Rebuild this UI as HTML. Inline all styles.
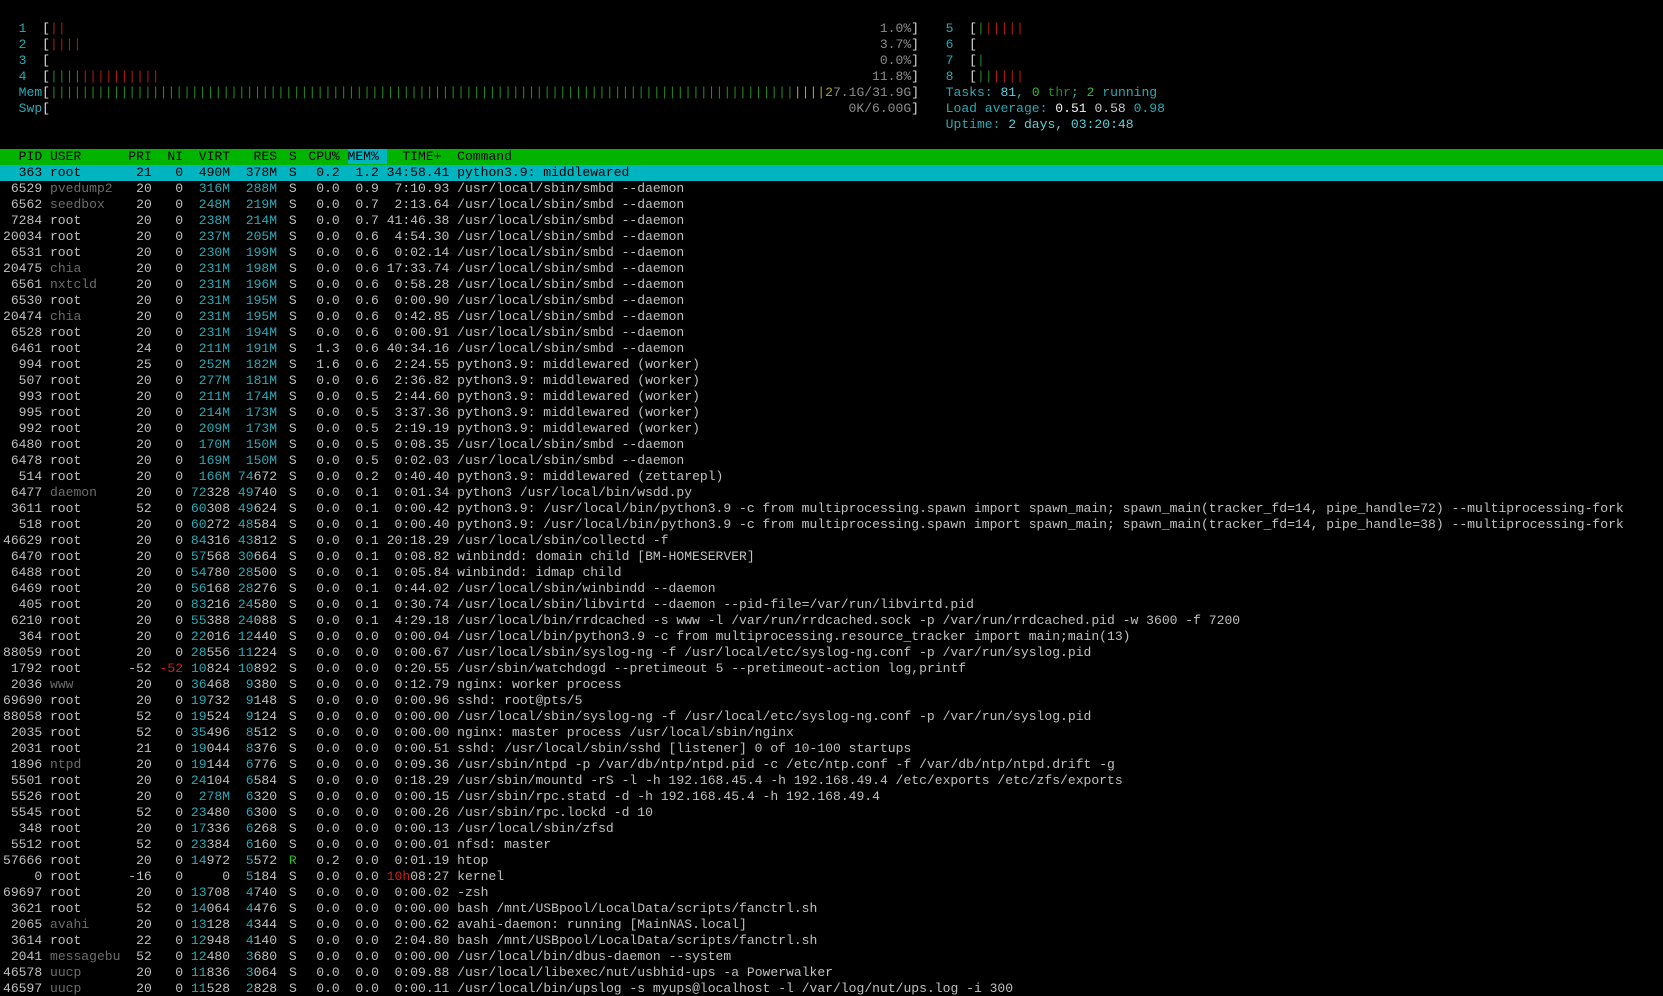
<!DOCTYPE html>
<html><head><meta charset="utf-8">
<style>
html,body{margin:0;padding:0;background:#000;width:1663px;height:996px;overflow:hidden}
body{font-family:"Liberation Mono",monospace;font-size:13.05px;color:#c0c0c0;padding-top:21px;box-sizing:border-box;position:relative}
.l{height:16px;line-height:16px;white-space:pre;padding-left:3px;overflow:hidden;width:1660px}
i,em,s,b,u{font-style:normal;text-decoration:none;font-weight:normal}
u{position:relative;left:4px}
i{color:#2aaab4}
em{color:#6c6c6c}
s{color:#c82020}
b{color:#2bbd2b}
.hd{background:#00b400;color:#000}
.hd span{background:#00b4c0}
.sel{background:#00b4c0;color:#000}
#L{position:absolute;left:3px;top:21px;width:916px}
#R{position:absolute;left:930px;top:21px;width:733px}
.m{height:16px;line-height:16px;white-space:pre;position:relative}
.m .p{position:absolute;right:0;top:0}
.w{color:#d8d8d8}
.rb{color:#b01818}
.gb{color:#1f8a1f}
.yb{color:#b0a030}
.gt{color:#8c8c8c}
.c2{color:#2aaab4}
.cb{color:#5fd0d8}
.wt{color:#f0f0f0}
.gn{color:#3ab83a}
</style></head><body>
<div id="L">
<div class="m"><i>  1  </i><span class="w">[</span><span class="rb">||</span><span class="p"><span class="gt">1.0%</span><span class="w">]</span></span></div>
<div class="m"><i>  2  </i><span class="w">[</span><span class="rb">||||</span><span class="p"><span class="gt">3.7%</span><span class="w">]</span></span></div>
<div class="m"><i>  3  </i><span class="w">[</span><span class="p"><span class="gt">0.0%</span><span class="w">]</span></span></div>
<div class="m"><i>  4  </i><span class="w">[</span><span class="gb">||||</span><span class="rb">||||||||||</span><span class="p"><span class="gt">11.8%</span><span class="w">]</span></span></div>
<div class="m"><i>  Mem</i><span class="w">[</span><span class="gb">|||||||||||||||||||||||||||||||||||||||||||||||||||||||||||||||||||||||||||||||||||||||||||||||</span><span class="yb">||||2</span><span class="gt">7.1G/31.9G</span><span class="w">]</span></div>
<div class="m"><i>  Swp</i><span class="w">[</span><span class="p"><span class="gt">0K/6.00G</span><span class="w">]</span></span></div>
</div>
<div id="R">
<div class="m"><i>  5  </i><span class="w">[</span><span class="gb">|</span><span class="rb">|||||</span></div>
<div class="m"><i>  6  </i><span class="w">[</span></div>
<div class="m"><i>  7  </i><span class="w">[</span><span class="gb">|</span></div>
<div class="m"><i>  8  </i><span class="w">[</span><span class="gb">||</span><span class="rb">||||</span></div>
<div class="m"><span class="c2">  Tasks: </span><span class="cb">81</span><span class="c2">, </span><span class="gn">0</span><span class="gb"> thr</span><span class="c2">; </span><span class="gn">2</span><span class="c2"> running</span></div>
<div class="m"><span class="c2">  Load average: </span><span class="wt">0.51 </span><span style="color:#c8c8c8">0.58 </span><span class="c2">0.98</span></div>
<div class="m"><span class="c2">  Uptime: </span><span class="cb">2 days, 03:20:48</span></div>
</div>
<div class="l"> </div><div class="l"> </div><div class="l"> </div><div class="l"> </div><div class="l"> </div><div class="l"> </div><div class="l"> </div><div class="l"> </div>
<div class="l hd">  PID USER      PRI  NI  VIRT   RES <u>S</u>  CPU% <span>MEM% </span>  TIME+  Command</div>
<div class="l sel">  363 root       21   0  490M  378M <u>S</u>   0.2  1.2 34:58.41 python3.9: middlewared</div>
<div class="l"> 6529 <em>pvedump2</em>   20   0  <i>316M</i>  <i>288M</i> <u>S</u>   0.0  0.9  7:10.93 /usr/local/sbin/smbd --daemon</div>
<div class="l"> 6562 <em>seedbox</em>    20   0  <i>248M</i>  <i>219M</i> <u>S</u>   0.0  0.7  2:13.64 /usr/local/sbin/smbd --daemon</div>
<div class="l"> 7284 root       20   0  <i>238M</i>  <i>214M</i> <u>S</u>   0.0  0.7 41:46.38 /usr/local/sbin/smbd --daemon</div>
<div class="l">20034 root       20   0  <i>237M</i>  <i>205M</i> <u>S</u>   0.0  0.6  4:54.30 /usr/local/sbin/smbd --daemon</div>
<div class="l"> 6531 root       20   0  <i>230M</i>  <i>199M</i> <u>S</u>   0.0  0.6  0:02.14 /usr/local/sbin/smbd --daemon</div>
<div class="l">20475 <em>chia</em>       20   0  <i>231M</i>  <i>198M</i> <u>S</u>   0.0  0.6 17:33.74 /usr/local/sbin/smbd --daemon</div>
<div class="l"> 6561 <em>nxtcld</em>     20   0  <i>231M</i>  <i>196M</i> <u>S</u>   0.0  0.6  0:58.28 /usr/local/sbin/smbd --daemon</div>
<div class="l"> 6530 root       20   0  <i>231M</i>  <i>195M</i> <u>S</u>   0.0  0.6  0:00.90 /usr/local/sbin/smbd --daemon</div>
<div class="l">20474 <em>chia</em>       20   0  <i>231M</i>  <i>195M</i> <u>S</u>   0.0  0.6  0:42.85 /usr/local/sbin/smbd --daemon</div>
<div class="l"> 6528 root       20   0  <i>231M</i>  <i>194M</i> <u>S</u>   0.0  0.6  0:00.91 /usr/local/sbin/smbd --daemon</div>
<div class="l"> 6461 root       24   0  <i>211M</i>  <i>191M</i> <u>S</u>   1.3  0.6 40:34.16 /usr/local/sbin/smbd --daemon</div>
<div class="l">  994 root       25   0  <i>252M</i>  <i>182M</i> <u>S</u>   1.6  0.6  2:24.55 python3.9: middlewared (worker)</div>
<div class="l">  507 root       20   0  <i>277M</i>  <i>181M</i> <u>S</u>   0.0  0.6  2:36.82 python3.9: middlewared (worker)</div>
<div class="l">  993 root       20   0  <i>211M</i>  <i>174M</i> <u>S</u>   0.0  0.5  2:44.60 python3.9: middlewared (worker)</div>
<div class="l">  995 root       20   0  <i>214M</i>  <i>173M</i> <u>S</u>   0.0  0.5  3:37.36 python3.9: middlewared (worker)</div>
<div class="l">  992 root       20   0  <i>209M</i>  <i>173M</i> <u>S</u>   0.0  0.5  2:19.19 python3.9: middlewared (worker)</div>
<div class="l"> 6480 root       20   0  <i>170M</i>  <i>150M</i> <u>S</u>   0.0  0.5  0:08.35 /usr/local/sbin/smbd --daemon</div>
<div class="l"> 6478 root       20   0  <i>169M</i>  <i>150M</i> <u>S</u>   0.0  0.5  0:02.03 /usr/local/sbin/smbd --daemon</div>
<div class="l">  514 root       20   0  <i>166M</i> <i>74</i>672 <u>S</u>   0.0  0.2  0:40.40 python3.9: middlewared (zettarepl)</div>
<div class="l"> 6477 <em>daemon</em>     20   0 <i>72</i>328 <i>49</i>740 <u>S</u>   0.0  0.1  0:01.34 python3 /usr/local/bin/wsdd.py</div>
<div class="l"> 3611 root       52   0 <i>60</i>308 <i>49</i>624 <u>S</u>   0.0  0.1  0:00.42 python3.9: /usr/local/bin/python3.9 -c from multiprocessing.spawn import spawn_main; spawn_main(tracker_fd=14, pipe_handle=72) --multiprocessing-fork</div>
<div class="l">  518 root       20   0 <i>60</i>272 <i>48</i>584 <u>S</u>   0.0  0.1  0:00.40 python3.9: /usr/local/bin/python3.9 -c from multiprocessing.spawn import spawn_main; spawn_main(tracker_fd=14, pipe_handle=38) --multiprocessing-fork</div>
<div class="l">46629 root       20   0 <i>84</i>316 <i>43</i>812 <u>S</u>   0.0  0.1 20:18.29 /usr/local/sbin/collectd -f</div>
<div class="l"> 6470 root       20   0 <i>57</i>568 <i>30</i>664 <u>S</u>   0.0  0.1  0:08.82 winbindd: domain child [BM-HOMESERVER]</div>
<div class="l"> 6488 root       20   0 <i>54</i>780 <i>28</i>500 <u>S</u>   0.0  0.1  0:05.84 winbindd: idmap child</div>
<div class="l"> 6469 root       20   0 <i>56</i>168 <i>28</i>276 <u>S</u>   0.0  0.1  0:44.02 /usr/local/sbin/winbindd --daemon</div>
<div class="l">  405 root       20   0 <i>83</i>216 <i>24</i>580 <u>S</u>   0.0  0.1  0:30.74 /usr/local/sbin/libvirtd --daemon --pid-file=/var/run/libvirtd.pid</div>
<div class="l"> 6210 root       20   0 <i>55</i>388 <i>24</i>088 <u>S</u>   0.0  0.1  4:29.18 /usr/local/bin/rrdcached -s www -l /var/run/rrdcached.sock -p /var/run/rrdcached.pid -w 3600 -f 7200</div>
<div class="l">  364 root       20   0 <i>22</i>016 <i>12</i>440 <u>S</u>   0.0  0.0  0:00.04 /usr/local/bin/python3.9 -c from multiprocessing.resource_tracker import main;main(13)</div>
<div class="l">88059 root       20   0 <i>28</i>556 <i>11</i>224 <u>S</u>   0.0  0.0  0:00.67 /usr/local/sbin/syslog-ng -f /usr/local/etc/syslog-ng.conf -p /var/run/syslog.pid</div>
<div class="l"> 1792 root      -52 <s>-52</s> <i>10</i>824 <i>10</i>892 <u>S</u>   0.0  0.0  0:20.55 /usr/sbin/watchdogd --pretimeout 5 --pretimeout-action log,printf</div>
<div class="l"> 2036 <em>www</em>        20   0 <i>36</i>468  <i>9</i>380 <u>S</u>   0.0  0.0  0:12.79 nginx: worker process</div>
<div class="l">69690 root       20   0 <i>19</i>732  <i>9</i>148 <u>S</u>   0.0  0.0  0:00.96 sshd: root@pts/5</div>
<div class="l">88058 root       52   0 <i>19</i>524  <i>9</i>124 <u>S</u>   0.0  0.0  0:00.00 /usr/local/sbin/syslog-ng -f /usr/local/etc/syslog-ng.conf -p /var/run/syslog.pid</div>
<div class="l"> 2035 root       52   0 <i>35</i>496  <i>8</i>512 <u>S</u>   0.0  0.0  0:00.00 nginx: master process /usr/local/sbin/nginx</div>
<div class="l"> 2031 root       21   0 <i>19</i>044  <i>8</i>376 <u>S</u>   0.0  0.0  0:00.51 sshd: /usr/local/sbin/sshd [listener] 0 of 10-100 startups</div>
<div class="l"> 1896 <em>ntpd</em>       20   0 <i>19</i>144  <i>6</i>776 <u>S</u>   0.0  0.0  0:09.36 /usr/sbin/ntpd -p /var/db/ntp/ntpd.pid -c /etc/ntp.conf -f /var/db/ntp/ntpd.drift -g</div>
<div class="l"> 5501 root       20   0 <i>24</i>104  <i>6</i>584 <u>S</u>   0.0  0.0  0:18.29 /usr/sbin/mountd -rS -l -h 192.168.45.4 -h 192.168.49.4 /etc/exports /etc/zfs/exports</div>
<div class="l"> 5526 root       20   0  <i>278M</i>  <i>6</i>320 <u>S</u>   0.0  0.0  0:00.15 /usr/sbin/rpc.statd -d -h 192.168.45.4 -h 192.168.49.4</div>
<div class="l"> 5545 root       52   0 <i>23</i>480  <i>6</i>300 <u>S</u>   0.0  0.0  0:00.26 /usr/sbin/rpc.lockd -d 10</div>
<div class="l">  348 root       20   0 <i>17</i>336  <i>6</i>268 <u>S</u>   0.0  0.0  0:00.13 /usr/local/sbin/zfsd</div>
<div class="l"> 5512 root       52   0 <i>23</i>384  <i>6</i>160 <u>S</u>   0.0  0.0  0:00.01 nfsd: master</div>
<div class="l">57666 root       20   0 <i>14</i>972  <i>5</i>572 <u><b>R</b></u>   0.2  0.0  0:01.19 htop</div>
<div class="l">    0 root      -16   0     0  <i>5</i>184 <u>S</u>   0.0  0.0 <s>10h</s>08:27 kernel</div>
<div class="l">69697 root       20   0 <i>13</i>708  <i>4</i>740 <u>S</u>   0.0  0.0  0:00.02 -zsh</div>
<div class="l"> 3621 root       52   0 <i>14</i>064  <i>4</i>476 <u>S</u>   0.0  0.0  0:00.00 bash /mnt/USBpool/LocalData/scripts/fanctrl.sh</div>
<div class="l"> 2065 <em>avahi</em>      20   0 <i>13</i>128  <i>4</i>344 <u>S</u>   0.0  0.0  0:00.62 avahi-daemon: running [MainNAS.local]</div>
<div class="l"> 3614 root       22   0 <i>12</i>948  <i>4</i>140 <u>S</u>   0.0  0.0  2:04.80 bash /mnt/USBpool/LocalData/scripts/fanctrl.sh</div>
<div class="l"> 2041 <em>messagebu</em>  52   0 <i>12</i>480  <i>3</i>680 <u>S</u>   0.0  0.0  0:00.00 /usr/local/bin/dbus-daemon --system</div>
<div class="l">46578 <em>uucp</em>       20   0 <i>11</i>836  <i>3</i>064 <u>S</u>   0.0  0.0  0:09.88 /usr/local/libexec/nut/usbhid-ups -a Powerwalker</div>
<div class="l">46597 <em>uucp</em>       20   0 <i>11</i>528  <i>2</i>828 <u>S</u>   0.0  0.0  0:00.11 /usr/local/bin/upslog -s myups@localhost -l /var/log/nut/ups.log -i 300</div>
</body></html>
